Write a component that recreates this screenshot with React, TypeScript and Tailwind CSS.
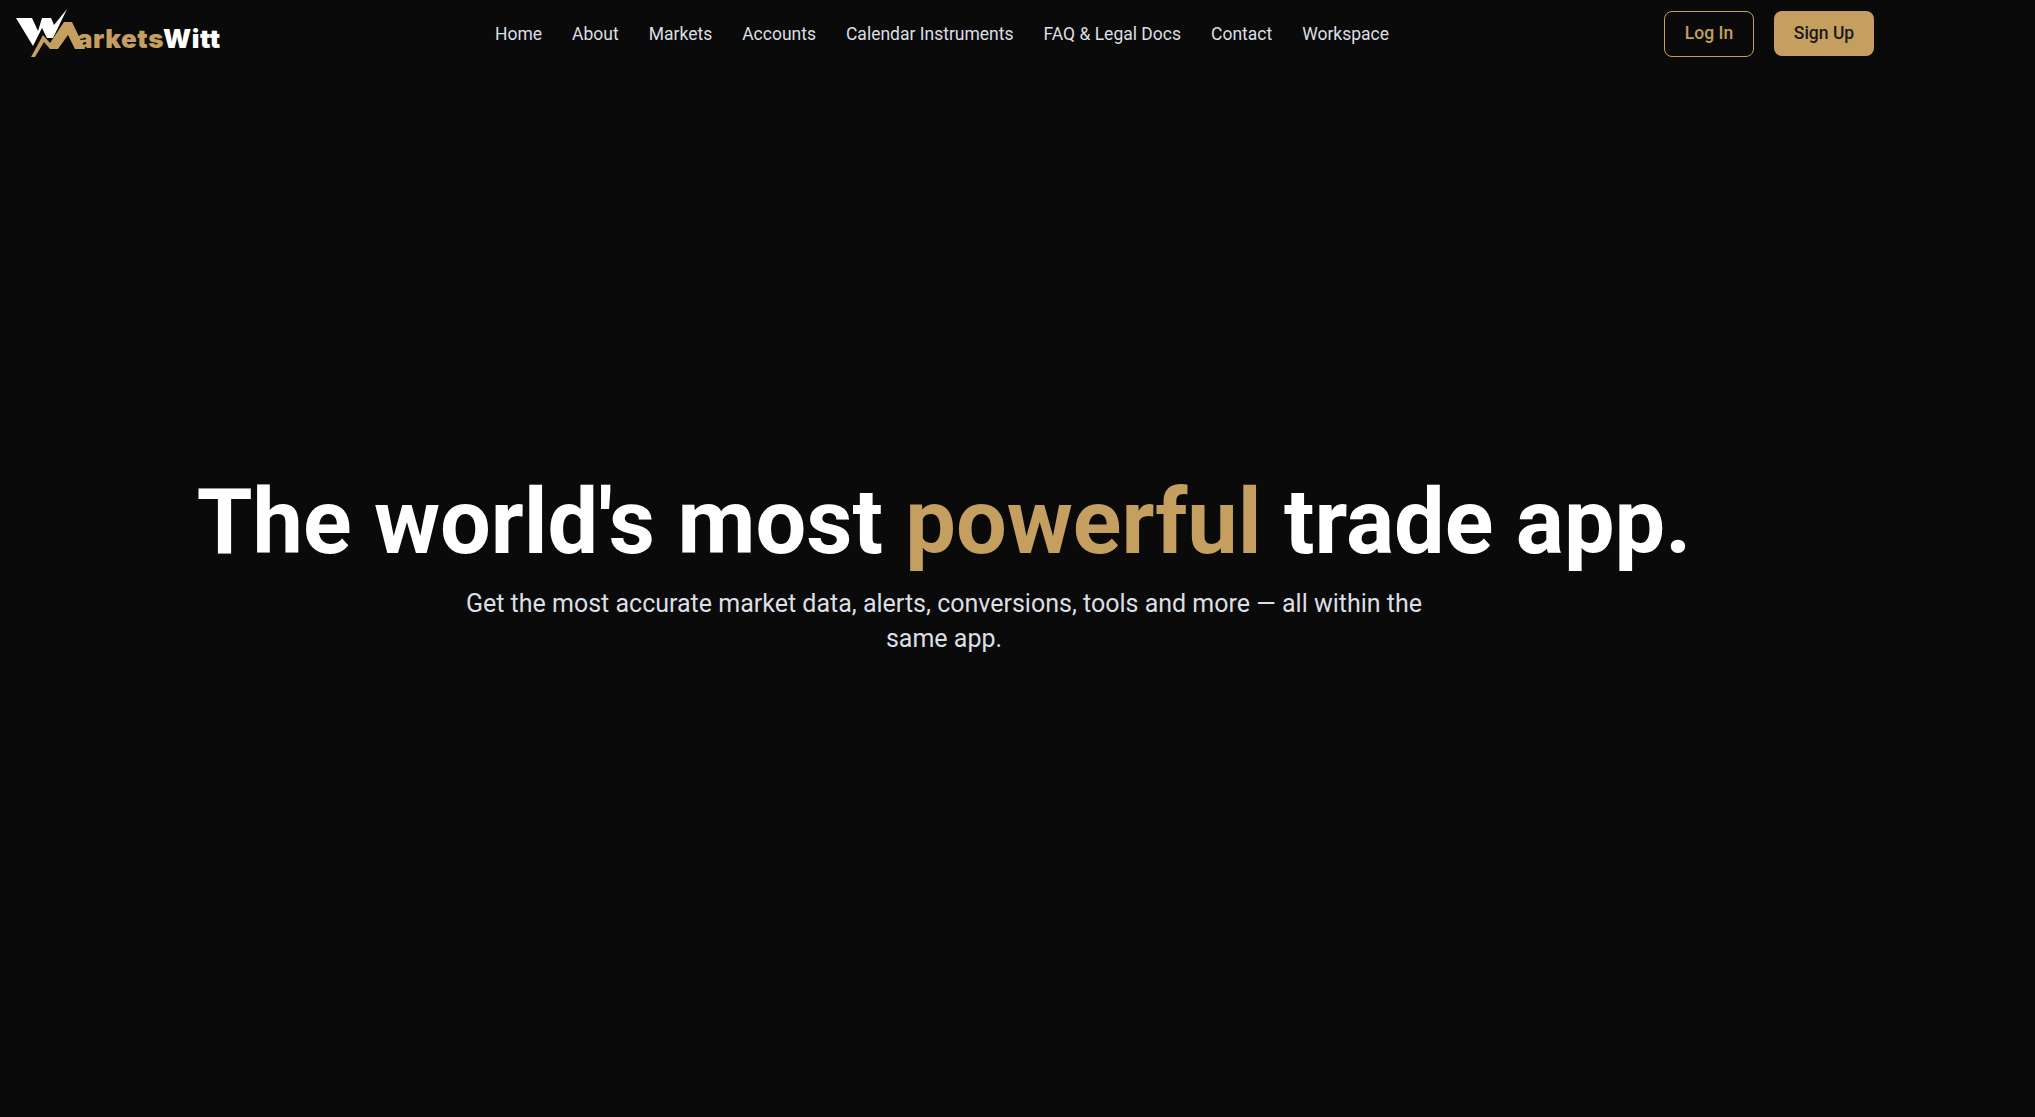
import React from 'react';

const navLinks = ['Home', 'About', 'Markets', 'Accounts', 'Calendar Instruments', 'FAQ & Legal Docs', 'Contact', 'Workspace'];

const Logo = () => (
  <div className="w-[204px] h-[52px] flex items-start shrink-0">
    <svg width="70" height="52" viewBox="16 8 70 52" className="shrink-0">
      <path d="M16 18H32L38 31L42 18H51L54 25L67 9L53 38H47L42 28L33 46Z" fill="#ffffff" />
      <path d="M31 57L43 35L50 43L64 22H72L85 49H75L68 35L58 49H50L44 42L35 57Z" fill="#c49f5f" />
    </svg>
    <span className="font-['Inter',sans-serif] text-[26px] leading-[30px] font-black tracking-[0.55px] ml-[-9px] mt-[16px]">
      <span className="text-[#c49f5f]">arkets</span>
      <span className="text-white">Witt</span>
    </span>
  </div>
);

export default function App() {
  return (
    <div className="min-h-[1117px] bg-[#0a0a0b] font-['Roboto',sans-serif] flex flex-col">
      <header className="w-[1888px] h-[67px] flex items-center pl-[16px] pr-[14px]">
        <Logo />
        <nav className="flex gap-[30px] ml-[275px] mt-[1px]">
          {navLinks.map(link => (
            <a key={link} className="text-[#dcdfe4] text-[17.5px]">{link}</a>
          ))}
        </nav>
        <div className="flex items-center gap-[20px] ml-auto">
          <button className="w-[90px] h-[46px] border border-[#c49f5f] rounded-lg text-[#c49f5f] text-[17.5px] font-medium">Log In</button>
          <button className="w-[100px] h-[45px] bg-[#c49f5f] rounded-lg text-[#1a1a1a] text-[17.5px] font-medium">Sign Up</button>
        </div>
      </header>
      <main className="w-[1888px] flex flex-col items-center pt-[401px]">
        <h1 className="text-[90px] leading-[110px] font-bold text-white">
          The world's most <span className="text-[#c49f5f]">powerful</span> trade app.
        </h1>
        <p className="w-[1000px] mt-[8px] text-center text-[25px] leading-[35px] text-[#dcdfe4]">
          Get the most accurate market data, alerts, conversions, tools and more — all within the same app.
        </p>
      </main>
    </div>
  );
}
